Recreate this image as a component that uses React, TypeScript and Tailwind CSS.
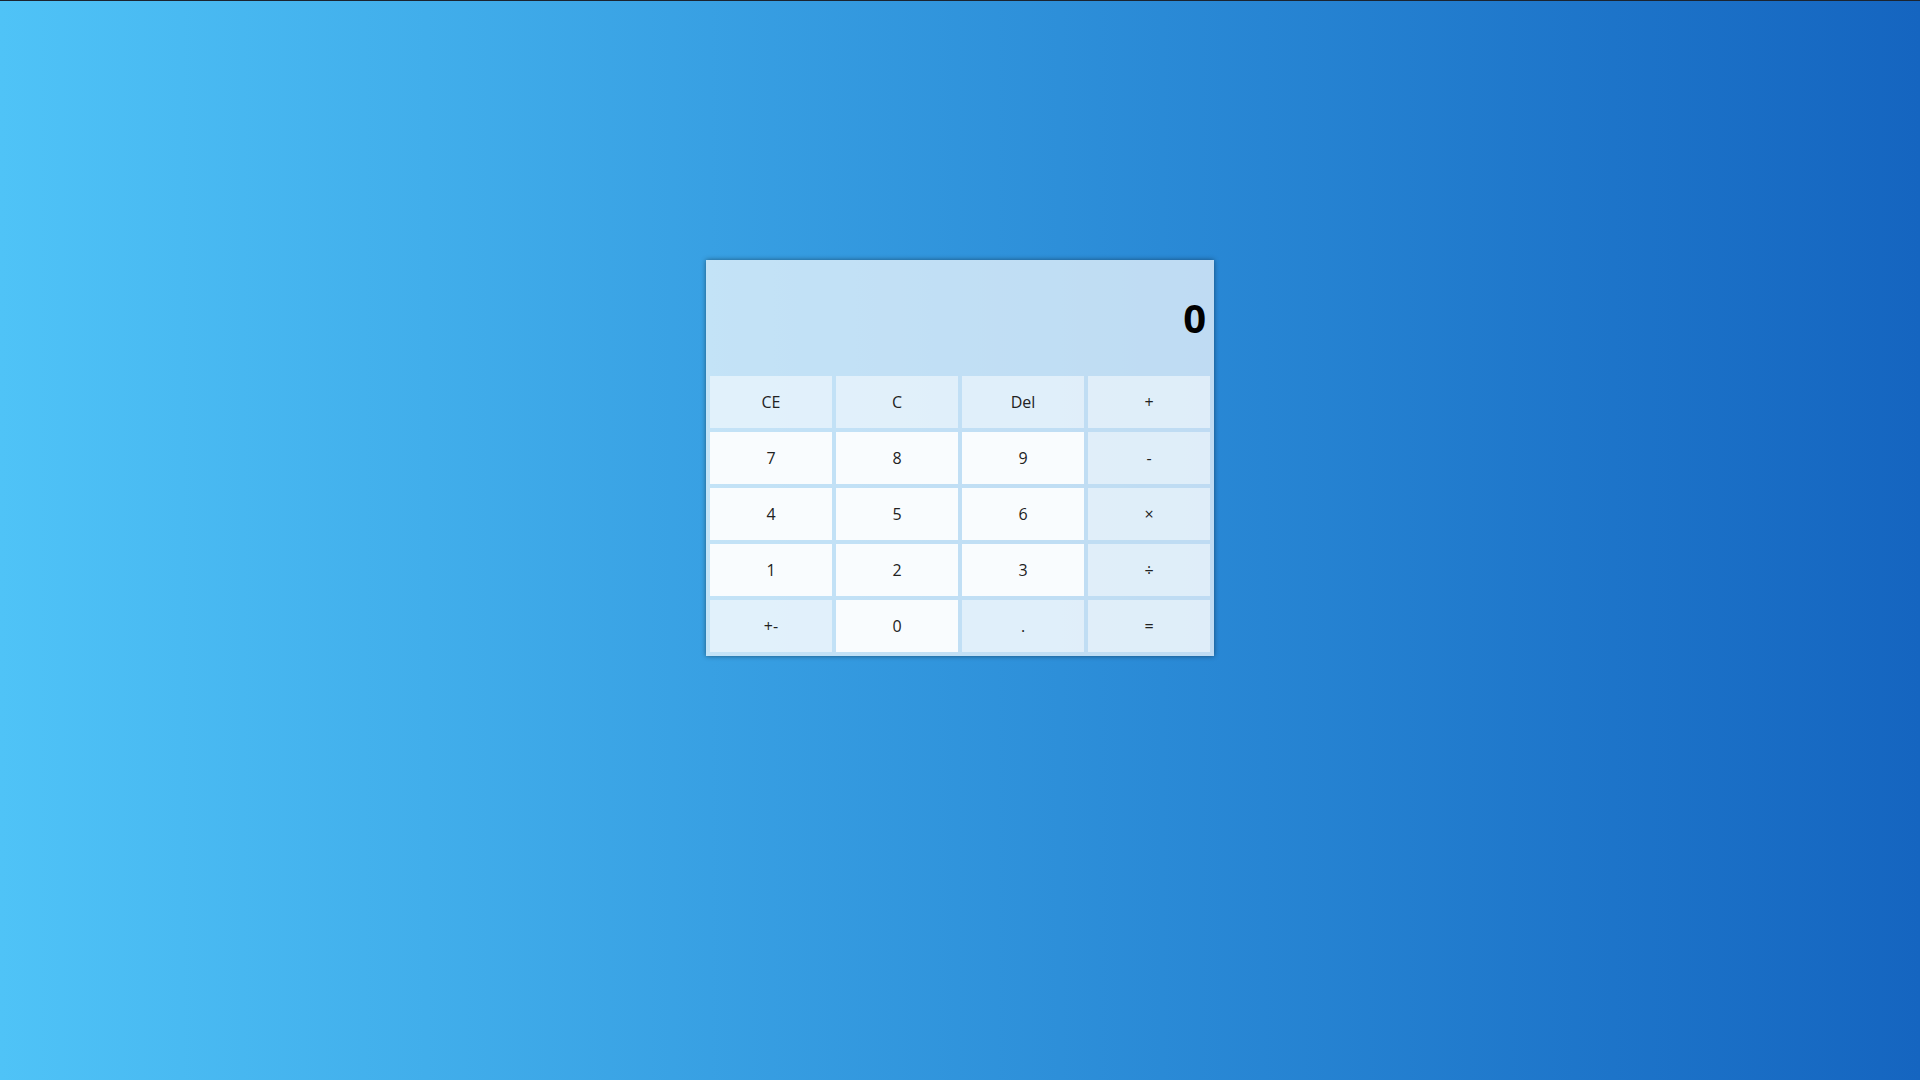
import React, { useState } from "react";

const keys: { label: string; kind: "num" | "fn" }[] = [
  { label: "CE", kind: "fn" },
  { label: "C", kind: "fn" },
  { label: "Del", kind: "fn" },
  { label: "+", kind: "fn" },
  { label: "7", kind: "num" },
  { label: "8", kind: "num" },
  { label: "9", kind: "num" },
  { label: "-", kind: "fn" },
  { label: "4", kind: "num" },
  { label: "5", kind: "num" },
  { label: "6", kind: "num" },
  { label: "×", kind: "fn" },
  { label: "1", kind: "num" },
  { label: "2", kind: "num" },
  { label: "3", kind: "num" },
  { label: "÷", kind: "fn" },
  { label: "+-", kind: "fn" },
  { label: "0", kind: "num" },
  { label: ".", kind: "fn" },
  { label: "=", kind: "fn" },
];

export default function App() {
  const [display] = useState("0");

  return (
    <div
      className="min-h-screen w-full border-t border-[#1b2430] bg-gradient-to-r from-[#4fc3f7] to-[#1565c0] pt-[259px]"
      style={{ fontFamily: '"Open Sans", "Noto Sans", sans-serif' }}
    >
      {/* Calculator */}
      <div className="mx-auto w-[508px] bg-white/70 shadow-[0_0_5px_rgba(0,0,0,0.45)]">
        <div className="flex h-[116px] items-center justify-end pr-2">
          <span className="text-[40px] font-bold leading-none text-black">{display}</span>
        </div>
        <div className="grid grid-cols-4 gap-1 px-1 pb-1">
          {keys.map((k) => (
            <button
              key={k.label}
              className={
                k.kind === "num"
                  ? "h-[52px] bg-white/90 text-[16px] text-[#222]"
                  : "h-[52px] bg-white/50 text-[16px] text-[#222]"
              }
            >
              {k.label}
            </button>
          ))}
        </div>
      </div>
    </div>
  );
}
